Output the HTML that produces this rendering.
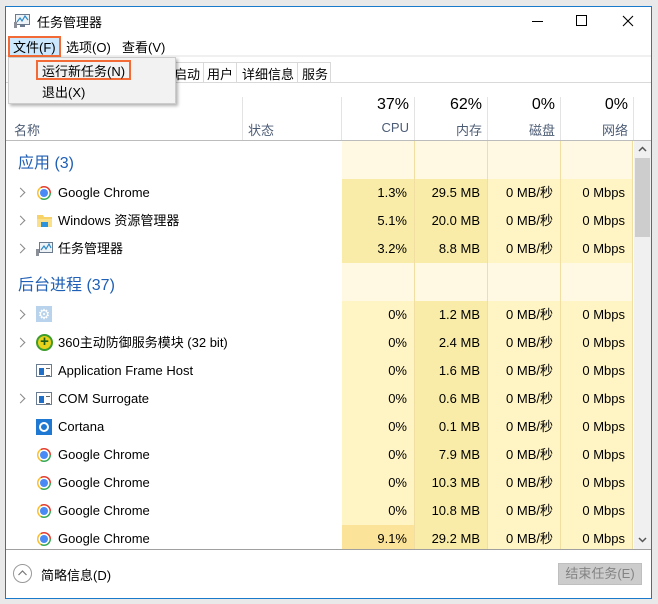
<!DOCTYPE html>
<html><head><meta charset="utf-8"><style>
*{margin:0;padding:0;box-sizing:border-box}
body{width:658px;height:604px;background:#e9e9e9;font-family:"Liberation Sans","Noto Sans CJK SC",sans-serif;font-size:13px;color:#000;position:relative;overflow:hidden}
.a{position:absolute;white-space:nowrap}
#win{position:absolute;left:5px;top:6px;width:647px;height:593px;background:#fff;border:1px solid #1979ca}
.vl{position:absolute;width:1px;background:#e3e3e3}
.cell{position:absolute;height:28px;line-height:28px;text-align:right;padding-right:7px;border-right:1px solid #f0dfa0}
.l{background:#fff4c4}.d{background:#f9eca8}.h{background:#fce39a}.p{background:#fff8e2}
.chev{position:absolute;left:17px;width:7px;height:7px;border-right:1.5px solid #888;border-top:1.5px solid #888;transform:rotate(45deg)}
.chrome{position:absolute;left:37px;width:14px;height:14px;border-radius:50%;background:conic-gradient(from -30deg,#e33b2e 0 120deg,#34a853 120deg 240deg,#fbc02d 240deg 360deg)}
.chrome:after{content:"";position:absolute;left:3px;top:3px;width:8px;height:8px;border-radius:50%;background:#4a8af4;box-shadow:0 0 0 1.5px #fff}
.txt{position:absolute;left:58px;line-height:28px}
.frm{position:absolute;left:36px;width:16px;height:13px;border:1px solid #6a7c92;background:#fff}
.frm:before{content:"";position:absolute;left:2px;top:3px;width:5px;height:7px;background:#1f6fc9}
.frm:after{content:"";position:absolute;left:9px;top:3px;width:4px;height:6px;border-top:1px solid #666;border-bottom:1px solid #666}
</style></head><body>
<div id="win"></div>
<!-- title -->
<svg class="a" style="left:14px;top:13px" width="17" height="16" viewBox="0 0 17 16"><rect x="1.5" y="1.5" width="14" height="10" fill="#eef3f8" stroke="#6b7a8c"/><polyline points="3,9 6,5 8,8 11,3 14,7" fill="none" stroke="#2c8ac8" stroke-width="1.2"/><rect x="0" y="9" width="3" height="6" fill="#8b9098"/><rect x="6" y="12" width="5" height="2" fill="#6b7a8c"/></svg>
<div class="a" style="left:37px;top:12px;font-size:13px">任务管理器</div>
<div class="a" style="left:532px;top:21px;width:11px;height:1px;background:#000"></div>
<div class="a" style="left:576px;top:15px;width:11px;height:11px;border:1px solid #000"></div>
<svg class="a" style="left:622px;top:15px" width="12" height="12"><path d="M1 1L11 11M11 1L1 11" stroke="#000" stroke-width="1.1"/></svg>
<!-- menu -->
<div class="a" style="left:6px;top:55px;width:645px;height:2px;background:#f0f0f0"></div>
<div class="a" style="left:8px;top:36px;width:53px;height:21px;background:#cce8ff;border:2px solid #f26a35"></div>
<div class="a" style="left:13px;top:37px">文件(F)</div>
<div class="a" style="left:66px;top:37px">选项(O)</div>
<div class="a" style="left:122px;top:37px">查看(V)</div>
<!-- tabs -->
<div class="a" style="left:6px;top:82px;width:645px;height:1px;background:#d9d9d9"></div>
<div class="a" style="left:170px;top:62px;width:34px;height:21px;border:1px solid #d9d9d9;background:#fff"></div>
<div class="a" style="left:203px;top:62px;width:34px;height:21px;border:1px solid #d9d9d9;background:#fff"></div>
<div class="a" style="left:236px;top:62px;width:62px;height:21px;border:1px solid #d9d9d9;background:#fff"></div>
<div class="a" style="left:297px;top:62px;width:34px;height:21px;border:1px solid #d9d9d9;background:#fff"></div>
<div class="a" style="left:174px;top:64px">启动</div>
<div class="a" style="left:207px;top:64px">用户</div>
<div class="a" style="left:242px;top:64px">详细信息</div>
<div class="a" style="left:302px;top:64px">服务</div>
<!-- dropdown -->
<div class="a" style="left:8px;top:57px;width:168px;height:47px;background:#f2f2f2;border:1px solid #ccc;box-shadow:2px 2px 3px rgba(0,0,0,.3)"></div>
<div class="a" style="left:36px;top:60px;width:95px;height:20px;border:2px solid #f26a35"></div>
<div class="a" style="left:42px;top:61px">运行新任务(N)</div>
<div class="a" style="left:42px;top:82px">退出(X)</div>
<!-- header -->
<div class="vl" style="left:242px;top:97px;height:44px"></div>
<div class="vl" style="left:341px;top:97px;height:44px"></div>
<div class="vl" style="left:414px;top:97px;height:44px"></div>
<div class="vl" style="left:487px;top:97px;height:44px"></div>
<div class="vl" style="left:560px;top:97px;height:44px"></div>
<div class="vl" style="left:633px;top:97px;height:44px"></div>
<div class="a" style="left:6px;top:140px;width:645px;height:1px;background:#bcbcbc"></div>
<div class="a" style="left:14px;top:120px;color:#4d5c75">名称</div>
<div class="a" style="left:248px;top:120px;color:#4d5c75">状态</div>
<div class="a" style="left:342px;width:67px;top:96px;text-align:right;font-size:16px">37%</div>
<div class="a" style="left:415px;width:67px;top:96px;text-align:right;font-size:16px">62%</div>
<div class="a" style="left:488px;width:67px;top:96px;text-align:right;font-size:16px">0%</div>
<div class="a" style="left:561px;width:67px;top:96px;text-align:right;font-size:16px">0%</div>
<div class="a" style="left:342px;width:67px;top:120px;text-align:right;color:#4d5c75">CPU</div>
<div class="a" style="left:415px;width:67px;top:120px;text-align:right;color:#4d5c75">内存</div>
<div class="a" style="left:488px;width:67px;top:120px;text-align:right;color:#4d5c75">磁盘</div>
<div class="a" style="left:561px;width:67px;top:120px;text-align:right;color:#4d5c75">网络</div>
<!-- data columns background -->
<div class="a" style="left:342px;top:141px;width:291px;height:408px;background:#fff8e2"></div>
<div class="vl" style="left:414px;top:141px;height:408px;background:#f0dfa0"></div>
<div class="vl" style="left:487px;top:141px;height:408px;background:#f0dfa0"></div>
<div class="vl" style="left:560px;top:141px;height:408px;background:#f0dfa0"></div>
<div class="vl" style="left:632px;top:141px;height:408px;background:#f0dfa0"></div>
<!-- scrollbar -->
<div class="a" style="left:634px;top:141px;width:17px;height:408px;background:#f0f0f0"></div>
<div class="a" style="left:635px;top:158px;width:15px;height:79px;background:#cdcdcd"></div>
<svg class="a" style="left:637px;top:145px" width="11" height="8"><path d="M2 6L5.5 2.5L9 6" stroke="#555" stroke-width="1.5" fill="none"/></svg>
<svg class="a" style="left:637px;top:536px" width="11" height="8"><path d="M2 2L5.5 5.5L9 2" stroke="#555" stroke-width="1.5" fill="none"/></svg>
<!-- groups -->
<div class="a" style="left:18px;top:149px;font-size:16px;color:#1f5fb5">应用 (3)</div>
<div class="a" style="left:18px;top:271px;font-size:16px;color:#1f5fb5">后台进程 (37)</div>

<!-- row 1 -->
<div class="chev" style="top:189px"></div><div class="chrome" style="top:186px"></div><div class="txt" style="top:179px">Google Chrome</div>
<div class="cell d" style="left:342px;top:179px;width:73px">1.3%</div><div class="cell d" style="left:415px;top:179px;width:73px">29.5 MB</div><div class="cell l" style="left:488px;top:179px;width:73px">0 MB/秒</div><div class="cell l" style="left:561px;top:179px;width:72px">0 Mbps</div>
<!-- row 2 -->
<div class="chev" style="top:217px"></div>
<svg class="a" style="left:36px;top:213px" width="17" height="15"><path d="M1 2h6l1 2h8v10H1z" fill="#f7d269"/><rect x="1" y="6" width="15" height="8" fill="#fbe08c"/><rect x="5" y="9" width="7" height="5" fill="#2d93dd"/></svg>
<div class="txt" style="top:207px">Windows 资源管理器</div>
<div class="cell d" style="left:342px;top:207px;width:73px">5.1%</div><div class="cell d" style="left:415px;top:207px;width:73px">20.0 MB</div><div class="cell l" style="left:488px;top:207px;width:73px">0 MB/秒</div><div class="cell l" style="left:561px;top:207px;width:72px">0 Mbps</div>
<!-- row 3 -->
<div class="chev" style="top:245px"></div>
<svg class="a" style="left:36px;top:241px" width="17" height="16"><rect x="3.5" y="1.5" width="13" height="10" fill="#eef3f8" stroke="#6b7a8c"/><polyline points="5,9 8,5 10,8 13,3 15,7" fill="none" stroke="#2c8ac8" stroke-width="1.2"/><rect x="0" y="8" width="3" height="7" fill="#8b9098"/></svg>
<div class="txt" style="top:235px">任务管理器</div>
<div class="cell d" style="left:342px;top:235px;width:73px">3.2%</div><div class="cell d" style="left:415px;top:235px;width:73px">8.8 MB</div><div class="cell l" style="left:488px;top:235px;width:73px">0 MB/秒</div><div class="cell l" style="left:561px;top:235px;width:72px">0 Mbps</div>
<!-- bg rows -->
<div class="chev" style="top:311px"></div>
<div class="a" style="left:36px;top:306px;width:16px;height:16px;background:#b9d3ec;color:#fff;font-size:14px;line-height:16px;text-align:center">⚙</div>
<div class="cell l" style="left:342px;top:301px;width:73px">0%</div><div class="cell d" style="left:415px;top:301px;width:73px">1.2 MB</div><div class="cell l" style="left:488px;top:301px;width:73px">0 MB/秒</div><div class="cell l" style="left:561px;top:301px;width:72px">0 Mbps</div>

<div class="chev" style="top:339px"></div>
<div class="a" style="left:36px;top:334px;width:17px;height:17px;border-radius:50%;background:#e8d21c;border:2px solid #3c9c2c;color:#1a5e1a;font-weight:bold;font-size:15px;line-height:12px;text-align:center">+</div>
<div class="txt" style="top:329px">360主动防御服务模块 (32 bit)</div>
<div class="cell l" style="left:342px;top:329px;width:73px">0%</div><div class="cell d" style="left:415px;top:329px;width:73px">2.4 MB</div><div class="cell l" style="left:488px;top:329px;width:73px">0 MB/秒</div><div class="cell l" style="left:561px;top:329px;width:72px">0 Mbps</div>

<div class="frm" style="top:364px"></div><div class="txt" style="top:357px">Application Frame Host</div>
<div class="cell l" style="left:342px;top:357px;width:73px">0%</div><div class="cell d" style="left:415px;top:357px;width:73px">1.6 MB</div><div class="cell l" style="left:488px;top:357px;width:73px">0 MB/秒</div><div class="cell l" style="left:561px;top:357px;width:72px">0 Mbps</div>

<div class="chev" style="top:395px"></div><div class="frm" style="top:392px"></div><div class="txt" style="top:385px">COM Surrogate</div>
<div class="cell l" style="left:342px;top:385px;width:73px">0%</div><div class="cell d" style="left:415px;top:385px;width:73px">0.6 MB</div><div class="cell l" style="left:488px;top:385px;width:73px">0 MB/秒</div><div class="cell l" style="left:561px;top:385px;width:72px">0 Mbps</div>

<div class="a" style="left:36px;top:419px;width:16px;height:16px;background:#1f78d1"><div style="position:absolute;left:3px;top:3px;width:10px;height:10px;border:2px solid #fff;border-radius:50%"></div></div>
<div class="txt" style="top:413px">Cortana</div>
<div class="cell l" style="left:342px;top:413px;width:73px">0%</div><div class="cell d" style="left:415px;top:413px;width:73px">0.1 MB</div><div class="cell l" style="left:488px;top:413px;width:73px">0 MB/秒</div><div class="cell l" style="left:561px;top:413px;width:72px">0 Mbps</div>

<div class="chrome" style="top:448px"></div><div class="txt" style="top:441px">Google Chrome</div>
<div class="cell l" style="left:342px;top:441px;width:73px">0%</div><div class="cell d" style="left:415px;top:441px;width:73px">7.9 MB</div><div class="cell l" style="left:488px;top:441px;width:73px">0 MB/秒</div><div class="cell l" style="left:561px;top:441px;width:72px">0 Mbps</div>

<div class="chrome" style="top:476px"></div><div class="txt" style="top:469px">Google Chrome</div>
<div class="cell l" style="left:342px;top:469px;width:73px">0%</div><div class="cell d" style="left:415px;top:469px;width:73px">10.3 MB</div><div class="cell l" style="left:488px;top:469px;width:73px">0 MB/秒</div><div class="cell l" style="left:561px;top:469px;width:72px">0 Mbps</div>

<div class="chrome" style="top:504px"></div><div class="txt" style="top:497px">Google Chrome</div>
<div class="cell l" style="left:342px;top:497px;width:73px">0%</div><div class="cell d" style="left:415px;top:497px;width:73px">10.8 MB</div><div class="cell l" style="left:488px;top:497px;width:73px">0 MB/秒</div><div class="cell l" style="left:561px;top:497px;width:72px">0 Mbps</div>

<div class="chrome" style="top:532px"></div><div class="txt" style="top:525px">Google Chrome</div>
<div class="cell h" style="left:342px;top:525px;width:73px;height:24px">9.1%</div><div class="cell d" style="left:415px;top:525px;width:73px;height:24px">29.2 MB</div><div class="cell l" style="left:488px;top:525px;width:73px;height:24px">0 MB/秒</div><div class="cell l" style="left:561px;top:525px;width:72px;height:24px">0 Mbps</div>
<!-- footer -->
<div class="a" style="left:6px;top:549px;width:645px;height:1px;background:#a0a0a0"></div>
<div class="a" style="left:6px;top:550px;width:645px;height:48px;background:#fff"></div>
<div class="a" style="left:13px;top:564px;width:19px;height:19px;border:1px solid #999;border-radius:50%"></div>
<svg class="a" style="left:17px;top:569px" width="11" height="8"><path d="M1.5 6L5.5 2L9.5 6" stroke="#777" stroke-width="1.2" fill="none"/></svg>
<div class="a" style="left:41px;top:565px">简略信息(D)</div>
<div class="a" style="left:558px;top:563px;width:84px;height:22px;background:#cccccc;border:1px solid #bfbfbf;color:#838383;text-align:center;line-height:20px">结束任务(E)</div>
</body></html>
